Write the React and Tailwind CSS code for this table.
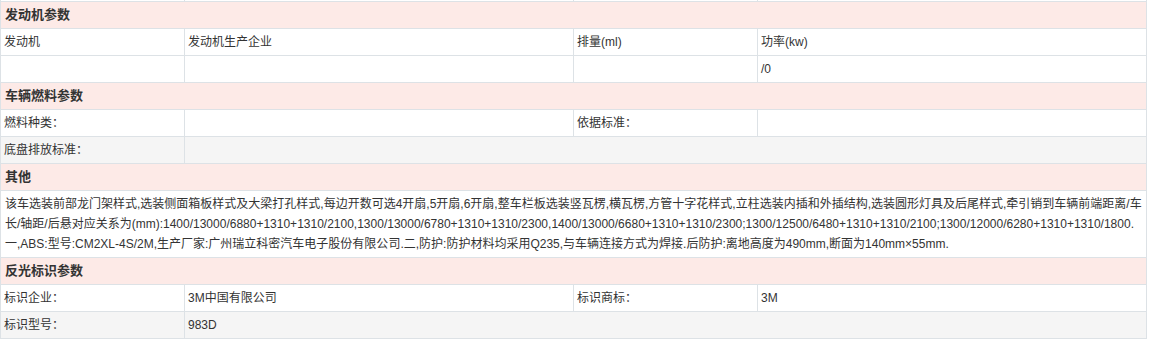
const cell = "border border-[#dde2e6] px-[3px] py-1 align-middle leading-[18px] text-[12px]";
const head = "border border-[#dde2e6] bg-[#fdeae7] px-[4px] py-1 text-left align-middle leading-[18px] text-[13px] font-bold text-[#333]";

function Section({ title }) {
  return (
    <tr>
      <th colSpan={4} className={head}>{title}</th>
    </tr>
  );
}

export default function App() {
  return (
    <div
      className="h-[341px] w-[1149px] overflow-hidden bg-white text-[#333]"
      style={{ fontFamily: '"Liberation Sans", Arial, "Noto Sans CJK SC", sans-serif' }}
    >
      <table className="-mt-[26px] w-[1146px] table-fixed border-collapse">
        <colgroup>
          <col className="w-[184px]" />
          <col className="w-[389px]" />
          <col className="w-[184px]" />
          <col className="w-[389px]" />
        </colgroup>
        <tbody>
          <tr>
            <td className={cell}>&nbsp;</td>
            <td className={cell}></td>
            <td className={cell}></td>
            <td className={cell}></td>
          </tr>

          <Section title="发动机参数" />
          <tr>
            <td className={cell}>发动机</td>
            <td className={cell}>发动机生产企业</td>
            <td className={cell}>排量(ml)</td>
            <td className={cell}>功率(kw)</td>
          </tr>
          <tr>
            <td className={cell}>&nbsp;</td>
            <td className={cell}></td>
            <td className={cell}></td>
            <td className={cell}>/0</td>
          </tr>

          <Section title="车辆燃料参数" />
          <tr>
            <td className={cell}>燃料种类：</td>
            <td className={cell}></td>
            <td className={cell}>依据标准：</td>
            <td className={cell}></td>
          </tr>
          <tr className="bg-[#f5f5f5]">
            <td className={cell}>底盘排放标准：</td>
            <td colSpan={3} className={cell}></td>
          </tr>

          <Section title="其他" />
          <tr>
            <td colSpan={4} className="border border-[#dde2e6] px-[4px] py-[3px] text-[12px] leading-[20px]">
              该车选装前部龙门架样式,选装侧面箱板样式及大梁打孔样式,每边开数可选4开扇,5开扇,6开扇,整车栏板选装竖瓦楞,横瓦楞,方管十字花样式,立柱选装内插和外插结构,选装圆形灯具及后尾样式,牵引销到车辆前端距离/车
              <br />
              长/轴距/后悬对应关系为(mm):1400/13000/6880+1310+1310/2100,1300/13000/6780+1310+1310/2300,1400/13000/6680+1310+1310/2300;1300/12500/6480+1310+1310/2100;1300/12000/6280+1310+1310/1800.
              <br />
              一,ABS:型号:CM2XL-4S/2M,生产厂家:广州瑞立科密汽车电子股份有限公司.二,防护:防护材料均采用Q235,与车辆连接方式为焊接.后防护:离地高度为490mm,断面为140mm×55mm.
            </td>
          </tr>

          <Section title="反光标识参数" />
          <tr>
            <td className={cell}>标识企业：</td>
            <td className={cell}>3M中国有限公司</td>
            <td className={cell}>标识商标：</td>
            <td className={cell}>3M</td>
          </tr>
          <tr className="bg-[#f5f5f5]">
            <td className={cell}>标识型号：</td>
            <td colSpan={3} className={cell}>983D</td>
          </tr>
        </tbody>
      </table>
    </div>
  );
}
